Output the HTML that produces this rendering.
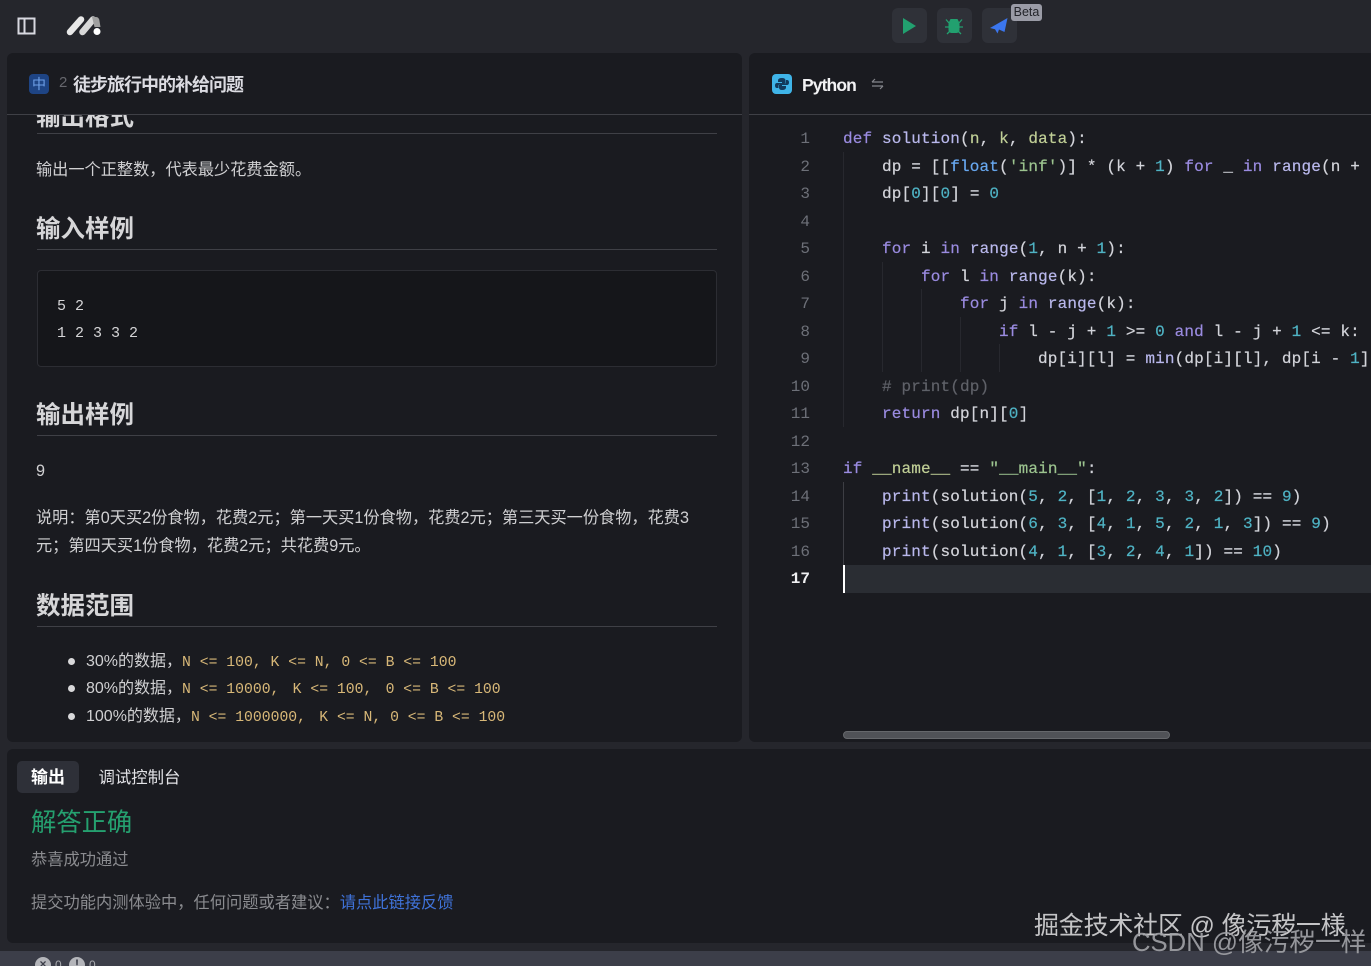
<!DOCTYPE html>
<html lang="zh"><head><meta charset="utf-8"><title>徒步旅行中的补给问题</title>
<style>
*{margin:0;padding:0;box-sizing:border-box}
html,body{width:1371px;height:966px;overflow:hidden;background:#25262c}
body{position:relative;font-family:"Liberation Sans","Noto Sans CJK SC",sans-serif;color:#d4d4d6}
.a{position:absolute;white-space:nowrap}
.panel{position:absolute;background:#1a1b20;border-radius:6px;overflow:hidden}
.line{position:absolute;height:1px;background:#3f4046}
h2{position:absolute;left:29px;font-size:24.5px;line-height:32px;font-weight:700;color:#d6d6d8;white-space:nowrap}
.t{position:absolute;font-size:16.2px;line-height:28px;color:#d0d0d2;white-space:nowrap}
.m{font-family:"Liberation Mono","Noto Sans CJK SC",monospace;font-size:14.75px}
.y{color:#d8b878}
.cl{position:absolute;left:94px;height:27.5px;line-height:27.5px;white-space:pre;font-family:"Liberation Mono",monospace;font-size:16px;letter-spacing:.15px;color:#d3d4da;-webkit-text-stroke:.2px}
.n{position:absolute;width:61px;text-align:right;height:27.5px;line-height:27.5px;font-family:"Liberation Mono",monospace;font-size:16px;color:#6d7078}
.k{color:#9a8be0}.u{color:#4fb3c4}.f{color:#b9b8ec}.s{color:#9cc48f}.v{color:#c0cf96}.c{color:#5f6168}.b{color:#68a8f0}
.g{position:absolute;width:1px;background:#27282e}
.btn{position:absolute;top:8px;width:35px;height:35px;border-radius:6px;background:#2f3138}
.sp{margin-left:4.4px}
.dot{position:absolute;left:61px;width:7px;height:7px;border-radius:50%;background:#d8d8da}
.st{position:absolute;top:957px;width:16px;height:16px;border-radius:50%;background:#b4b5ba;color:#3c3e49;font-size:12px;font-weight:700;line-height:14px;text-align:center}
</style></head><body>

<svg class="a" style="left:17px;top:17px" width="20" height="18" viewBox="0 0 20 18" fill="none"><rect x="1.5" y="1.5" width="16" height="15" stroke="#d8d8e0" stroke-width="2"/><path d="M7.5 2v14" stroke="#d8d8e0" stroke-width="2"/></svg>
<svg class="a" style="left:66px;top:14px" width="38" height="23" viewBox="0 0 38 23"><path d="M4 18 L15 5.500" stroke="#e8e8e8" stroke-width="6.500" stroke-linecap="round"/><path d="M16.500 18 L27 5.500" stroke="#d8d8d8" stroke-width="6.500" stroke-linecap="round"/><path d="M26 3h4q3 0 3.500 4l1 6h-6z" fill="#a0a0a0"/><circle cx="31" cy="17.500" r="3.500" fill="#fff"/></svg>

<div class="btn" style="left:892px"></div>
<svg class="a" style="left:903px;top:18px" width="13" height="16" viewBox="0 0 13 16"><path d="M0 0 13 8 0 16z" fill="#22a06f"/></svg>
<div class="btn" style="left:937px"></div>
<svg class="a" style="left:945px;top:17px" width="18" height="18" viewBox="0 0 18 18"><path d="M5.500 2h7l1.500 3H4z" fill="#22a06f"/><rect x="3.500" y="4" width="11" height="12" rx="3" fill="#22a06f"/><path d="M4 6 1 2.500M14 6l3-3.500M4 10H0M14 10h4M5 14l-3 3M13 14l3 3" stroke="#22a06f" stroke-width="1.300"/></svg>
<div class="btn" style="left:982px"></div>
<svg class="a" style="left:990px;top:17px" width="18" height="18" viewBox="0 0 18 18"><path d="M17.500 1 0 11l5 1.200L7.500 16.500 9 12.500l5.500 2.500z" fill="#3b76ee"/></svg>
<div class="a" style="left:1011px;top:4px;width:31px;height:17px;border-radius:3px;background:#9a9ba6;color:#23242a;font-size:12.500px;line-height:17px;text-align:center">Beta</div>

<!-- left panel -->
<div class="panel" style="left:7px;top:53px;width:735px;height:689px">
  <div style="position:absolute;left:0;top:61px;width:735px;height:628px;overflow:hidden">
    <h2 style="top:-12px">输出格式</h2>
    <div class="line" style="left:30px;top:19px;width:680px"></div>
    <div class="t" style="left:29px;top:42px">输出一个正整数，代表最少花费金额。</div>
    <h2 style="top:100px">输入样例</h2>
    <div class="line" style="left:30px;top:135px;width:680px"></div>
    <div style="position:absolute;left:30px;top:156px;width:680px;height:97px;background:#15161a;border:1px solid #2c2d33;border-radius:4px"></div>
    <div class="t m" style="left:50px;top:179px;line-height:27px;color:#d4d4d6;font-size:15px">5 2<br>1 2 3 3 2</div>
    <h2 style="top:286px">输出样例</h2>
    <div class="line" style="left:30px;top:321px;width:680px"></div>
    <div class="t" style="left:29px;top:343px">9</div>
    <div class="t" style="left:29px;top:390px">说明：第0天买2份食物，花费2元；第一天买1份食物，花费2元；第三天买一份食物，花费3</div>
    <div class="t" style="left:29px;top:418px">元；第四天买1份食物，花费2元；共花费9元。</div>
    <h2 style="top:477px">数据范围</h2>
    <div class="line" style="left:30px;top:512px;width:680px"></div>
    <div class="dot" style="top:544px"></div>
    <div class="t" style="left:79px;top:534px;font-size:16px">30%的数据，<span class="m y">N &lt;= 100, K &lt;= N, 0 &lt;= B &lt;= 100</span></div>
    <div class="dot" style="top:571px"></div>
    <div class="t" style="left:79px;top:561px;font-size:16px">80%的数据，<span class="m y">N &lt;= 10000, <span class="sp">K</span> &lt;= 100, <span class="sp">0</span> &lt;= B &lt;= 100</span></div>
    <div class="dot" style="top:599px"></div>
    <div class="t" style="left:79px;top:589px;font-size:16px">100%的数据，<span class="m y">N &lt;= 1000000, <span class="sp">K</span> &lt;= N, 0 &lt;= B &lt;= 100</span></div>
  </div>
  <div class="line" style="left:0;top:61px;width:735px"></div>
  <div class="a" style="left:22px;top:21px;width:20px;height:20px;border-radius:4px;background:#1e4484;color:#6fa0e8;font-size:14px;line-height:20px;text-align:center">中</div>
  <div class="a" style="left:52px;top:21px;font-size:15px;line-height:18px;color:#66676d">2</div>
  <div class="a" style="left:66px;top:19px;font-size:18px;line-height:26px;font-weight:700;color:#dcdce2;letter-spacing:-1px">徒步旅行中的补给问题</div>
</div>

<!-- right panel -->
<div class="panel" style="left:749px;top:53px;width:622px;height:689px;border-radius:6px 0 0 6px">
  <div class="line" style="left:0;top:61px;width:622px"></div>
  <svg class="a" style="left:23px;top:21px" width="20" height="20" viewBox="0 0 20 20"><rect width="20" height="20" rx="4" fill="#3fb4e8"/><path d="M10 4q-4 0-4 2.500V8h4v1H5q-2 0-2 2.500T5 14h1.500v-2q0-2 2-2h3.500q1.500 0 1.500-1.500v-2Q13.500 4 10 4z" fill="#123a5c"/><path d="M10 16q4 0 4-2.500V12h-4v-1h5q2 0 2-2.500T15 6h-1v2q0 2-2 2H8.500Q7 10 7 11.500v2Q7 16 10 16z" fill="#123a5c"/></svg>
  <div class="a" style="left:53px;top:19px;font-size:17.500px;line-height:26px;font-weight:700;color:#f2f2f4;letter-spacing:-.9px;font-family:'Liberation Sans',sans-serif">Python</div>
  <svg class="a" style="left:122px;top:25px" width="13" height="12" viewBox="0 0 13 12" fill="none" stroke="#85868c" stroke-width="1.200"><path d="M1 4h11M1 4l3-3M12 8H1M12 8 9 11"/></svg>

  <div class="g" style="left:94px;top:99px;height:275px"></div>
  <div class="g" style="left:133px;top:209px;height:110px"></div>
  <div class="g" style="left:172px;top:236px;height:83px"></div>
  <div class="g" style="left:211px;top:264px;height:55px"></div>
  <div class="g" style="left:250px;top:291px;height:28px"></div>
  <div class="g" style="left:94px;top:429px;height:83px;background:#3d3e44"></div>
  <div style="position:absolute;left:94px;top:512px;width:528px;height:28px;background:#2a2d33"></div>
  <div style="position:absolute;left:94px;top:512px;width:2px;height:28px;background:#fff"></div>

  <span class="n" style="top:73px">1</span><span class="n" style="top:100.500px">2</span><span class="n" style="top:128px">3</span><span class="n" style="top:155.500px">4</span><span class="n" style="top:183px">5</span><span class="n" style="top:210.500px">6</span><span class="n" style="top:238px">7</span><span class="n" style="top:265.500px">8</span><span class="n" style="top:293px">9</span><span class="n" style="top:320.500px">10</span><span class="n" style="top:348px">11</span><span class="n" style="top:375.500px">12</span><span class="n" style="top:403px">13</span><span class="n" style="top:430.500px">14</span><span class="n" style="top:458px">15</span><span class="n" style="top:485.500px">16</span><span class="n" style="top:513px;color:#f0f0f2;font-weight:700">17</span>

  <div class="cl" style="top:73px"><span class="k">def</span> <span class="f">solution</span>(<span class="v">n</span>, <span class="v">k</span>, <span class="v">data</span>):</div>
  <div class="cl" style="top:100.500px">    dp = [[<span class="b">float</span>(<span class="s">'inf'</span>)] * (k + <span class="u">1</span>) <span class="k">for</span> _ <span class="k">in</span> <span class="f">range</span>(n +</div>
  <div class="cl" style="top:128px">    dp[<span class="u">0</span>][<span class="u">0</span>] = <span class="u">0</span></div>
  <div class="cl" style="top:183px">    <span class="k">for</span> i <span class="k">in</span> <span class="f">range</span>(<span class="u">1</span>, n + <span class="u">1</span>):</div>
  <div class="cl" style="top:210.500px">        <span class="k">for</span> l <span class="k">in</span> <span class="f">range</span>(k):</div>
  <div class="cl" style="top:238px">            <span class="k">for</span> j <span class="k">in</span> <span class="f">range</span>(k):</div>
  <div class="cl" style="top:265.500px">                <span class="k">if</span> l - j + <span class="u">1</span> &gt;= <span class="u">0</span> <span class="k">and</span> l - j + <span class="u">1</span> &lt;= k:</div>
  <div class="cl" style="top:293px">                    dp[i][l] = <span class="f">min</span>(dp[i][l], dp[i - <span class="u">1</span>]</div>
  <div class="cl" style="top:320.500px">    <span class="c"># print(dp)</span></div>
  <div class="cl" style="top:348px">    <span class="k">return</span> dp[n][<span class="u">0</span>]</div>
  <div class="cl" style="top:403px"><span class="k">if</span> <span class="v">__name__</span> == <span class="s">"__main__"</span>:</div>
  <div class="cl" style="top:430.500px">    <span class="f">print</span>(solution(<span class="u">5</span>, <span class="u">2</span>, [<span class="u">1</span>, <span class="u">2</span>, <span class="u">3</span>, <span class="u">3</span>, <span class="u">2</span>]) == <span class="u">9</span>)</div>
  <div class="cl" style="top:458px">    <span class="f">print</span>(solution(<span class="u">6</span>, <span class="u">3</span>, [<span class="u">4</span>, <span class="u">1</span>, <span class="u">5</span>, <span class="u">2</span>, <span class="u">1</span>, <span class="u">3</span>]) == <span class="u">9</span>)</div>
  <div class="cl" style="top:485.500px">    <span class="f">print</span>(solution(<span class="u">4</span>, <span class="u">1</span>, [<span class="u">3</span>, <span class="u">2</span>, <span class="u">4</span>, <span class="u">1</span>]) == <span class="u">10</span>)</div>

  <span class="a" style="left:94px;top:678px;width:327px;height:8px;border-radius:4px;background:#505257;border:1px solid #66686c"></span>
</div>

<!-- bottom panel -->
<div class="panel" style="left:7px;top:749px;width:1364px;height:194px;border-radius:6px 0 0 6px">
  <div class="a" style="left:10px;top:12px;width:62px;height:32px;border-radius:5px;background:#2e3038;color:#fff;font-size:17px;font-weight:700;line-height:34px;text-align:center">输出</div>
  <div class="a" style="left:91.500px;top:13px;font-size:16.400px;line-height:32px;color:#e2e2e6">调试控制台</div>
  <div class="a" style="left:24px;top:56px;font-size:25.300px;line-height:36px;color:#25a06f">解答正确</div>
  <div class="a" style="left:24px;top:98px;font-size:16.250px;line-height:26px;color:#8b8c90">恭喜成功通过</div>
  <div class="a" style="left:24px;top:141px;font-size:16.250px;line-height:26px;color:#8b8c90">提交功能内测体验中，任何问题或者建议：<span style="color:#3f72d8">请点此链接反馈</span></div>
</div>

<!-- status bar -->
<div class="a" style="left:0;top:951px;width:1371px;height:15px;background:#3c3e49"></div>
<div class="st" style="left:35px">×</div>
<div class="a" style="left:55px;top:957px;font-size:12px;line-height:16px;color:#a8a9ae">0</div>
<div class="st" style="left:69px">!</div>
<div class="a" style="left:89px;top:957px;font-size:12px;line-height:16px;color:#a8a9ae">0</div>

<!-- watermarks -->
<div class="a" style="left:1034px;top:909px;font-size:25px;line-height:34px;color:#c4c4c6;letter-spacing:-.2px">掘金技术社区 @ 像污秽一様</div>
<div class="a" style="left:1132px;top:926px;font-size:25.700px;line-height:34px;color:#a2a3a8;opacity:.9">CSDN @像污秽一样</div>
</body></html>
